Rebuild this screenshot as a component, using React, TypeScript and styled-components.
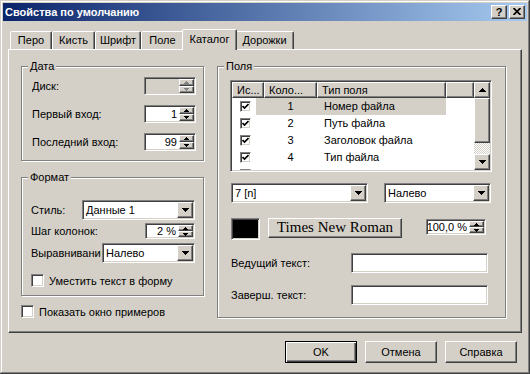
import React from "react";
import styled, { createGlobalStyle, css } from "styled-components";

const FACE = "#D4D0C8";
const SHADOW = "#808080";
const DARK = "#404040";

const GlobalStyle = createGlobalStyle`
  html, body {
    margin: 0;
    padding: 0;
    background: ${FACE};
  }
  body {
    font-family: "Liberation Sans", Arial, sans-serif;
    font-size: 11px;
    color: #000;
  }
`;

const raised = css`
  box-sizing: border-box;
  background: ${FACE};
  border: 1px solid;
  border-color: #fff ${DARK} ${DARK} #fff;
  box-shadow: inset -1px -1px 0 ${SHADOW};
`;

const sunken = css`
  box-sizing: border-box;
  border: 1px solid;
  border-color: ${SHADOW} #fff #fff ${SHADOW};
  box-shadow: inset 1px 1px 0 ${DARK}, inset -1px -1px 0 ${FACE};
  padding: 1px;
`;

const Window = styled.div`
  width: 530px;
  height: 374px;
  box-sizing: border-box;
  padding: 3px;
  background: ${FACE};
  box-shadow: inset -1px -1px 0 ${DARK}, inset 1px 1px 0 ${FACE},
    inset -2px -2px 0 ${SHADOW}, inset 2px 2px 0 #fff;
  display: flex;
  flex-direction: column;
`;

const TitleBar = styled.div`
  height: 18px;
  padding: 0 2px;
  display: flex;
  align-items: center;
  justify-content: space-between;
  background: linear-gradient(to right, #0a246a, #a6caf0);
`;

const TitleText = styled.div`
  color: #fff;
  font-weight: bold;
  font-size: 11px;
`;

const CaptionButtons = styled.div`
  display: flex;
  gap: 2px;
`;

const CaptionButton = styled.div`
  ${raised}
  width: 16px;
  height: 14px;
  display: flex;
  align-items: center;
  justify-content: center;
  font-weight: bold;
  font-size: 11px;
  line-height: 12px;
  padding-bottom: 1px;
`;

const Body = styled.div`
  flex: 1;
  padding: 0 5px;
  display: flex;
  flex-direction: column;
`;

const TabStrip = styled.div`
  margin-top: 8px;
  height: 20px;
  padding-left: 2px;
  display: flex;
  align-items: flex-end;
`;

const Tab = styled.div<{ $w: number; $active?: boolean }>`
  box-sizing: border-box;
  width: ${(p) => p.$w}px;
  height: 18px;
  padding-bottom: 1px;
  display: flex;
  align-items: center;
  justify-content: center;
  white-space: nowrap;
  background: ${FACE};
  border-style: solid;
  border-width: 1px 1px 0 1px;
  border-color: #fff ${DARK} transparent #fff;
  border-radius: 2px 2px 0 0;
  box-shadow: inset -1px 0 0 ${SHADOW};
  ${(p) =>
    p.$active &&
    css`
      width: ${p.$w + 4}px;
      height: 21px;
      margin: 0 -2px -1px;
      padding-bottom: 3px;
      position: relative;
      z-index: 1;
    `}
`;

const Panel = styled.div`
  box-sizing: border-box;
  height: 284px;
  border: 1px solid;
  border-color: #fff ${DARK} ${DARK} #fff;
  box-shadow: inset -1px -1px 0 ${SHADOW};
  padding: 1px 12px 0 12px;
  display: flex;
  gap: 12px;
`;

const Column = styled.div<{ $w: number }>`
  width: ${(p) => p.$w}px;
  padding-top: 9px;
  display: flex;
  flex-direction: column;
`;

const Group = styled.fieldset<{ $w: number; $mt?: number }>`
  box-sizing: border-box;
  width: ${(p) => p.$w}px;
  margin: ${(p) => p.$mt ?? 0}px 0 0 0;
  padding: 0;
  min-width: 0;
  border: 1px solid ${SHADOW};
  box-shadow: inset 1px 1px 0 #fff, 1px 1px 0 #fff;
`;

const Legend = styled.legend`
  margin-left: 6px;
  padding: 0 2px;
  line-height: 13px;
  background: ${FACE};
`;

const GroupBody = styled.div<{ $pad: string; $gap?: number }>`
  padding: ${(p) => p.$pad};
  display: flex;
  flex-direction: column;
  gap: ${(p) => p.$gap ?? 0}px;
`;

const FormRow = styled.div<{ $h: number; $mt?: number }>`
  height: ${(p) => p.$h}px;
  margin-top: ${(p) => p.$mt ?? 0}px;
  display: flex;
  align-items: center;
  justify-content: space-between;
`;

const Label = styled.div<{ $w?: number }>`
  white-space: nowrap;
  overflow: hidden;
  ${(p) => p.$w && `width: ${p.$w}px; flex-shrink: 0;`}
`;

const Field = styled.div<{ $w: number; $h: number; $disabled?: boolean }>`
  ${sunken}
  width: ${(p) => p.$w}px;
  height: ${(p) => p.$h}px;
  flex-shrink: 0;
  display: flex;
  background: ${(p) => (p.$disabled ? FACE : "#fff")};
`;

const FieldText = styled.div<{ $right?: boolean }>`
  flex: 1;
  min-width: 0;
  display: flex;
  align-items: center;
  justify-content: ${(p) => (p.$right ? "flex-end" : "flex-start")};
  padding: 0 2px;
  white-space: nowrap;
  overflow: hidden;
`;

const SpinStack = styled.div`
  width: 15px;
  display: flex;
  flex-direction: column;
`;

const SmallButton = styled.div`
  ${raised}
  flex: 1;
  display: flex;
  align-items: center;
  justify-content: center;
`;

const DropButton = styled.div`
  ${raised}
  width: 16px;
  display: flex;
  align-items: center;
  justify-content: center;
`;

const CheckRow = styled.div<{ $mt?: number }>`
  margin-top: ${(p) => p.$mt ?? 0}px;
  display: flex;
  align-items: center;
  gap: 5px;
  height: 13px;
`;

const CheckBox = styled.div<{ $size: number }>`
  ${sunken}
  width: ${(p) => p.$size}px;
  height: ${(p) => p.$size}px;
  background: #fff;
  padding: 0;
  display: flex;
  align-items: center;
  justify-content: center;
  flex-shrink: 0;
`;

/* list view */
const List = styled.div`
  ${sunken}
  width: 262px;
  height: 92px;
  background: #fff;
  display: flex;
`;

const ListMain = styled.div`
  flex: 1;
  min-width: 0;
  display: flex;
  flex-direction: column;
  overflow: hidden;
`;

const HeaderRow = styled.div`
  height: 16px;
  flex-shrink: 0;
  display: flex;
`;

const HeaderCell = styled.div<{ $w?: number }>`
  ${raised}
  ${(p) => (p.$w ? `width: ${p.$w}px;` : "flex: 1;")}
  padding-left: 4px;
  line-height: 14px;
  white-space: nowrap;
  overflow: hidden;
`;

const ItemRow = styled.div`
  height: 17px;
  flex-shrink: 0;
  display: flex;
  line-height: 17px;
`;

const CheckCell = styled.div`
  width: 24px;
  padding: 3px 0 0 8px;
  box-sizing: border-box;
`;

const ItemBody = styled.div<{ $sel?: boolean }>`
  width: 190px;
  display: flex;
  background: ${(p) => (p.$sel ? FACE : "transparent")};
`;

const NumCell = styled.div`
  margin-left: 8px;
  width: 53px;
  text-align: center;
`;

const TextCell = styled.div`
  width: 129px;
  padding-left: 7px;
  box-sizing: border-box;
  white-space: nowrap;
`;

const ScrollBar = styled.div`
  width: 16px;
  display: flex;
  flex-direction: column;
`;

const ScrollButton = styled.div<{ $h: number }>`
  ${raised}
  height: ${(p) => p.$h}px;
  display: flex;
  align-items: center;
  justify-content: center;
`;

const Track = styled.div`
  flex: 1;
  background-color: #fff;
  background-image: repeating-conic-gradient(${FACE} 0% 25%, #fff 0% 50%);
  background-size: 2px 2px;
`;

const FieldRow = styled.div<{ $mt: number; $top?: boolean }>`
  margin-top: ${(p) => p.$mt}px;
  padding-left: 1px;
  display: flex;
  align-items: ${(p) => (p.$top ? "flex-start" : "center")};
`;

const Swatch = styled.div`
  ${sunken}
  width: 29px;
  height: 22px;
  background: #000;
`;

const FontButton = styled.div`
  ${raised}
  width: 134px;
  height: 20px;
  margin-left: 8px;
  display: flex;
  align-items: center;
  justify-content: center;
  font-family: "Liberation Serif", "Times New Roman", serif;
  font-size: 15px;
  padding-bottom: 1px;
`;

const Gap = styled.div<{ $w: number; $mt?: number }>`
  margin-left: ${(p) => p.$w}px;
  margin-top: ${(p) => p.$mt ?? 0}px;
  display: flex;
`;

const ButtonRow = styled.div`
  margin-top: 8px;
  padding-right: 5px;
  display: flex;
  justify-content: flex-end;
  gap: 8px;
`;

const DialogButton = styled.div<{ $default?: boolean }>`
  ${raised}
  width: 72px;
  height: 22px;
  display: flex;
  align-items: center;
  justify-content: center;
  ${(p) =>
    p.$default &&
    css`
      border-color: #000;
      box-shadow: inset 1px 1px 0 #fff, inset -1px -1px 0 ${DARK},
        inset -2px -2px 0 ${SHADOW};
    `}
`;

type Dir = "up" | "down";

const Arrow = ({ dir, w, color = "#000" }: { dir: Dir; w: number; color?: string }) => {
  const rows = Math.ceil(w / 2);
  const rects = [];
  for (let i = 0; i < rows; i++) {
    const len = 1 + i * 2;
    const y = dir === "up" ? i : rows - 1 - i;
    rects.push(<rect key={i} x={(w - len) / 2} y={y} width={len} height={1} fill={color} />);
  }
  return (
    <svg width={w} height={rows} shapeRendering="crispEdges">
      {rects}
    </svg>
  );
};

const Spin = ({
  w,
  h,
  value,
  disabled,
}: {
  w: number;
  h: number;
  value?: string;
  disabled?: boolean;
}) => (
  <Field $w={w} $h={h} $disabled={disabled}>
    <FieldText $right>{value}</FieldText>
    <SpinStack>
      <SmallButton>
        <Arrow dir="up" w={5} color={disabled ? SHADOW : "#000"} />
      </SmallButton>
      <SmallButton>
        <Arrow dir="down" w={5} color={disabled ? SHADOW : "#000"} />
      </SmallButton>
    </SpinStack>
  </Field>
);

const Combo = ({ w, value }: { w: number; value: string }) => (
  <Field $w={w} $h={20}>
    <FieldText>{value}</FieldText>
    <DropButton>
      <Arrow dir="down" w={7} />
    </DropButton>
  </Field>
);

const Check = ({ size }: { size: number }) => (
  <CheckBox $size={size}>
    <svg width={7} height={7} viewBox="0 0 7 7">
      <path d="M0.5 3 L2.5 5 L6.5 1" stroke="#000" strokeWidth={1.6} fill="none" />
    </svg>
  </CheckBox>
);

// the fifth row is scrolled almost out of view: only its checkbox edge shows
const items = [
  { n: "1", text: "Номер файла" },
  { n: "2", text: "Путь файла" },
  { n: "3", text: "Заголовок файла" },
  { n: "4", text: "Тип файла" },
  { n: "", text: "" },
];

const tabs = [
  { label: "Перо", w: 42 },
  { label: "Кисть", w: 43 },
  { label: "Шрифт", w: 46 },
  { label: "Поле", w: 43 },
  { label: "Каталог", w: 51, active: true },
  { label: "Дорожки", w: 59 },
];

const App = () => (
  <>
    <GlobalStyle />
    <Window>
      <TitleBar>
        <TitleText>Свойства по умолчанию</TitleText>
        <CaptionButtons>
          <CaptionButton>?</CaptionButton>
          <CaptionButton>
            <svg width={8} height={7} viewBox="0 0 8 7">
              <path d="M0.5 0 L7.5 7 M7.5 0 L0.5 7" stroke="#000" strokeWidth={1.7} />
            </svg>
          </CaptionButton>
        </CaptionButtons>
      </TitleBar>

      <Body>
        <TabStrip>
          {tabs.map((t) => (
            <Tab key={t.label} $w={t.w} $active={t.active}>
              {t.label}
            </Tab>
          ))}
        </TabStrip>

        <Panel>
          <Column $w={184}>
            <Group $w={183}>
              <Legend>Дата</Legend>
              <GroupBody $pad="4px 7px 9px 10px" $gap={10}>
                <FormRow $h={18}>
                  <Label>Диск:</Label>
                  <Spin w={52} h={18} disabled />
                </FormRow>
                <FormRow $h={18}>
                  <Label>Первый вход:</Label>
                  <Spin w={52} h={18} value="1" />
                </FormRow>
                <FormRow $h={18}>
                  <Label>Последний вход:</Label>
                  <Spin w={52} h={18} value="99" />
                </FormRow>
              </GroupBody>
            </Group>

            <Group $w={183} $mt={10}>
              <Legend>Формат</Legend>
              <GroupBody $pad="16px 8px 8px 9px">
                <FormRow $h={20}>
                  <Label>Стиль:</Label>
                  <Combo w={113} value="Данные 1" />
                </FormRow>
                <FormRow $h={16} $mt={3}>
                  <Label>Шаг колонок:</Label>
                  <Spin w={50} h={16} value="2 %" />
                </FormRow>
                <FormRow $h={20} $mt={4}>
                  <Label $w={70}>Выравнивание:</Label>
                  <Combo w={93} value="Налево" />
                </FormRow>
                <CheckRow $mt={11}>
                  <CheckBox $size={13} />
                  <span>Уместить текст в форму</span>
                </CheckRow>
              </GroupBody>
            </Group>

            <CheckRow $mt={9}>
              <CheckBox $size={13} />
              <span>Показать окно примеров</span>
            </CheckRow>
          </Column>

          <Column $w={290}>
            <Group $w={289}>
              <Legend>Поля</Legend>
              <GroupBody $pad="7px 13px 12px 12px">
                <List>
                  <ListMain>
                    <HeaderRow>
                      <HeaderCell $w={32}>Ис...</HeaderCell>
                      <HeaderCell $w={53}>Коло...</HeaderCell>
                      <HeaderCell $w={129}>Тип поля</HeaderCell>
                      <HeaderCell />
                    </HeaderRow>
                    {items.map((it, i) => (
                      <ItemRow key={i}>
                        <CheckCell>
                          <Check size={11} />
                        </CheckCell>
                        <ItemBody $sel={i === 0}>
                          <NumCell>{it.n}</NumCell>
                          <TextCell>{it.text}</TextCell>
                        </ItemBody>
                      </ItemRow>
                    ))}
                  </ListMain>
                  <ScrollBar>
                    <ScrollButton $h={16}>
                      <Arrow dir="up" w={7} />
                    </ScrollButton>
                    <ScrollButton $h={45} />
                    <Track />
                    <ScrollButton $h={16}>
                      <Arrow dir="down" w={7} />
                    </ScrollButton>
                  </ScrollBar>
                </List>

                <FieldRow $mt={11}>
                  <Combo w={137} value="7 [n]" />
                  <Gap $w={16}>
                    <Combo w={107} value="Налево" />
                  </Gap>
                </FieldRow>

                <FieldRow $mt={15} $top>
                  <Swatch />
                  <FontButton>Times New Roman</FontButton>
                  <Gap $w={24} $mt={1}>
                    <Spin w={60} h={16} value="100,0 %" />
                  </Gap>
                </FieldRow>

                <FieldRow $mt={13}>
                  <Label $w={120}>Ведущий текст:</Label>
                  <Field $w={137} $h={20} />
                </FieldRow>

                <FieldRow $mt={12}>
                  <Label $w={120}>Заверш. текст:</Label>
                  <Field $w={137} $h={20} />
                </FieldRow>
              </GroupBody>
            </Group>
          </Column>
        </Panel>

        <ButtonRow>
          <DialogButton $default>OK</DialogButton>
          <DialogButton>Отмена</DialogButton>
          <DialogButton>Справка</DialogButton>
        </ButtonRow>
      </Body>
    </Window>
  </>
);

export default App;
